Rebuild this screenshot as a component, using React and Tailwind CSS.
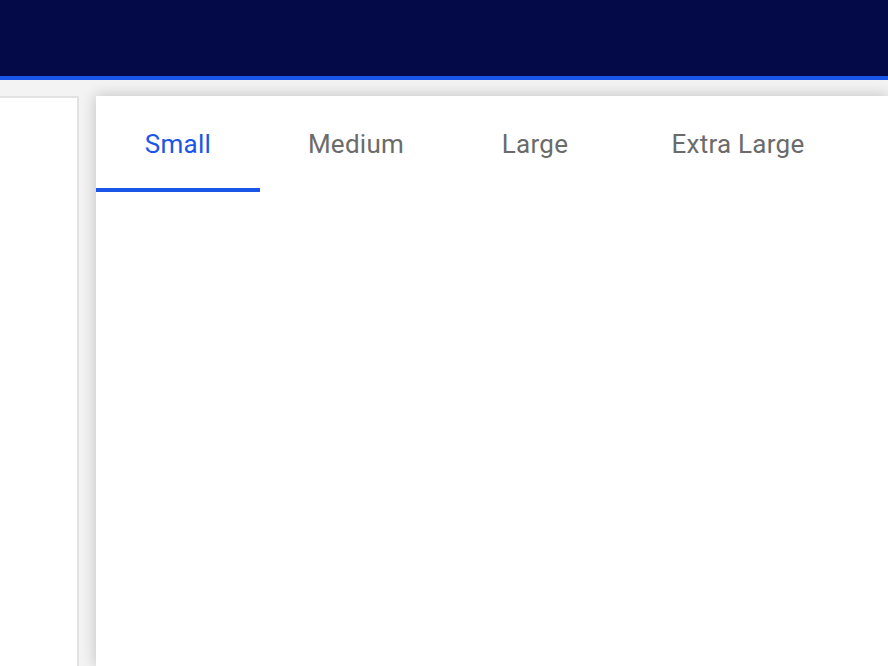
import React from "react";

const tabs = [
  { label: "Small", w: "w-[164px]", active: true },
  { label: "Medium", w: "w-[192px]" },
  { label: "Large", w: "w-[166px]" },
  { label: "Extra Large", w: "w-[240px]" },
];

export default function App() {
  return (
    <div className="h-[666px] w-[888px] overflow-hidden flex flex-col bg-[#f3f3f3]" style={{ fontFamily: "Roboto, 'Liberation Sans', sans-serif" }}>
      <div className="h-[80px] shrink-0 bg-[#040a47] border-b-4 border-[#1a56e8]" />
      <div className="flex-1 flex pt-4 gap-[17px]">
        <div className="w-[79px] shrink-0 bg-white border-t-2 border-r-2 border-[#e2e2e2]" />
        <div className="flex-1 bg-white shadow-[0_0_14px_rgba(0,0,0,0.22)]">
          <div className="flex h-[96px]">
            {tabs.map((t) => (
              <div
                key={t.label}
                className={`${t.w} shrink-0 flex items-center justify-center pt-1 border-b-4 text-[26px] leading-none tracking-[0.01em] ${t.active ? "text-[#1a56e8] border-[#1a56e8]" : "text-[#6b6b6b] border-transparent"}`}
              >
                <span>{t.label}</span>
              </div>
            ))}
          </div>
        </div>
      </div>
    </div>
  );
}
